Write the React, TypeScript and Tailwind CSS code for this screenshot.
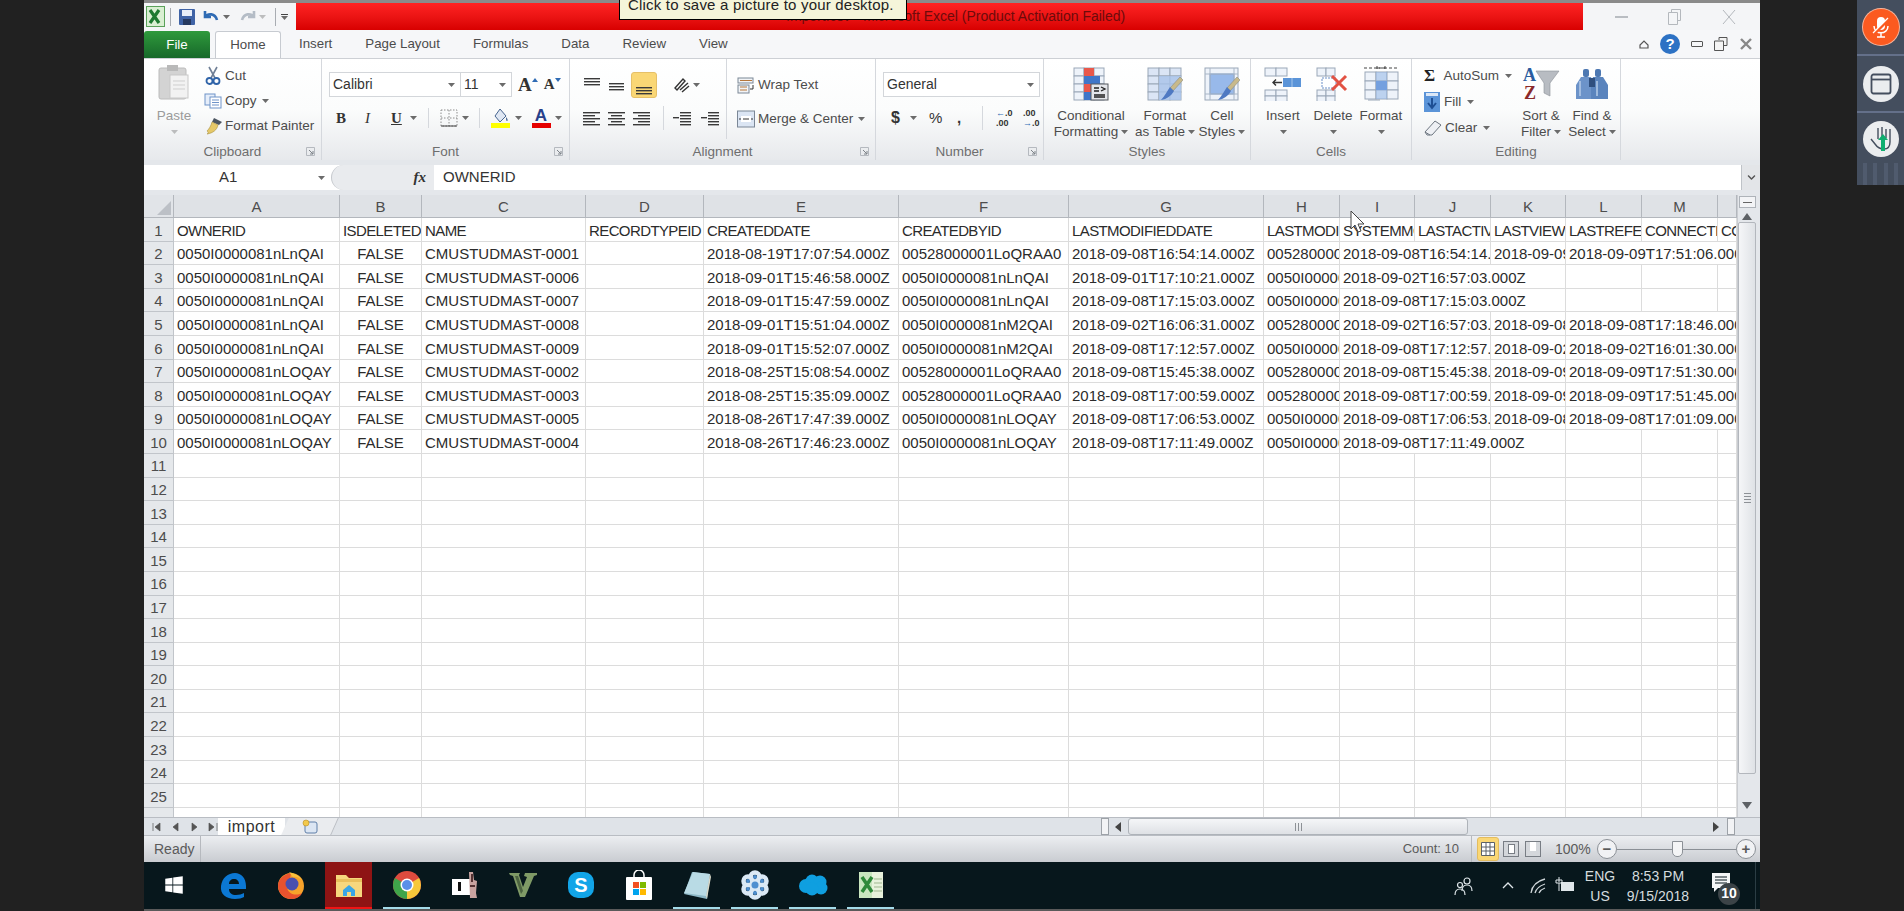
import React from "react";
import { FaWindows, FaChevronDown } from "react-icons/fa";

// column widths live in the grid template below: header + A..N
const COLUMNS = ["A", "B", "C", "D", "E", "F", "G", "H", "I", "J", "K", "L", "M", ""];

type Cell = { text?: string; span?: string; center?: boolean };

const OWNER_A = "0050I0000081nLnQAI";
const OWNER_B = "0050I0000081nLOQAY";
const OWNER_C = "00528000001LoQRAA0";
const OWNER_D = "0050I0000081nM2QAI";

const makeRow = (
	owner: string,
	name: string,
	created: string,
	by: string,
	modified: string,
	h: string,
	k?: string,
	l?: string,
): Cell[] => {
	const start: Cell[] = [
		{ text: owner },
		{ text: "FALSE", center: true },
		{ text: "CMUSTUDMAST-" + name },
		{},
		{ text: created },
		{ text: by },
		{ text: modified },
		{ text: h },
	];
	if (!k) return [...start, { text: modified, span: "col-span-3" }, {}, {}, {}];
	return [
		...start,
		{ text: modified, span: "col-span-2" },
		{ text: k },
		{ text: l, span: "col-span-3" },
	];
};

const ROWS: Cell[][] = [
	[
		"OWNERID",
		"ISDELETED",
		"NAME",
		"RECORDTYPEID",
		"CREATEDDATE",
		"CREATEDBYID",
		"LASTMODIFIEDDATE",
		"LASTMODIFIEDBYID",
		"SYSTEMMODSTAMP",
		"LASTACTIVITYDATE",
		"LASTVIEWEDDATE",
		"LASTREFERENCEDDATE",
		"CONNECTIONRECEIVEDID",
		"CONNECTIONSENTID",
	].map((text) => ({ text })),
	makeRow(OWNER_A, "0001", "2018-08-19T17:07:54.000Z", OWNER_C, "2018-09-08T16:54:14.000Z", OWNER_C, "2018-09-09T17:51:06.000Z", "2018-09-09T17:51:06.000Z"),
	makeRow(OWNER_A, "0006", "2018-09-01T15:46:58.000Z", OWNER_A, "2018-09-01T17:10:21.000Z", OWNER_A).map((c, i) =>
		i === 8 ? { text: "2018-09-02T16:57:03.000Z", span: "col-span-3" } : c,
	),
	makeRow(OWNER_A, "0007", "2018-09-01T15:47:59.000Z", OWNER_A, "2018-09-08T17:15:03.000Z", OWNER_A),
	makeRow(OWNER_A, "0008", "2018-09-01T15:51:04.000Z", OWNER_D, "2018-09-02T16:06:31.000Z", OWNER_C, "2018-09-08T17:18:46.000Z", "2018-09-08T17:18:46.000Z").map((c, i) =>
		i === 8 ? { text: "2018-09-02T16:57:03.000Z", span: "col-span-2" } : c,
	),
	makeRow(OWNER_A, "0009", "2018-09-01T15:52:07.000Z", OWNER_D, "2018-09-08T17:12:57.000Z", OWNER_A, "2018-09-02T16:01:30.000Z", "2018-09-02T16:01:30.000Z"),
	makeRow(OWNER_B, "0002", "2018-08-25T15:08:54.000Z", OWNER_C, "2018-09-08T15:45:38.000Z", OWNER_C, "2018-09-09T17:51:30.000Z", "2018-09-09T17:51:30.000Z"),
	makeRow(OWNER_B, "0003", "2018-08-25T15:35:09.000Z", OWNER_C, "2018-09-08T17:00:59.000Z", OWNER_C, "2018-09-09T17:51:45.000Z", "2018-09-09T17:51:45.000Z"),
	makeRow(OWNER_B, "0005", "2018-08-26T17:47:39.000Z", OWNER_B, "2018-09-08T17:06:53.000Z", OWNER_B, "2018-09-08T17:01:09.000Z", "2018-09-08T17:01:09.000Z"),
	makeRow(OWNER_B, "0004", "2018-08-26T17:46:23.000Z", OWNER_B, "2018-09-08T17:11:49.000Z", OWNER_B),
];

const Caret = ({ className = "" }: { className?: string }) => (
	<svg width="7" height="4" viewBox="0 0 7 4" className={"shrink-0 " + className}>
		<path d="M0 0h7L3.5 4z" fill="#6b6b6b" />
	</svg>
);

const Lines = ({ rows, box = 20 }: { rows: [number, number, number][]; box?: number }) => (
	<svg width={box} height={box} viewBox="0 0 20 20">
		{rows.map(([x, y, w], i) => (
			<rect key={i} x={x} y={y} width={w} height="1.4" fill="#3a3a3a" />
		))}
	</svg>
);

const cellsSvg = (x: number, y: number, cols: number, rows: number, w: number, h: number, fill = "#eef3fa") => {
	const out = [];
	for (let c = 0; c < cols; c++) {
		for (let r = 0; r < rows; r++) {
			out.push(
				<rect key={`${x}-${y}-${c}-${r}`} x={x + c * w} y={y + r * h} width={w} height={h} fill={fill} stroke="#9aa7b8" strokeWidth="1" />,
			);
		}
	}
	return out;
};

const Brush = () => (
	<g>
		<path d="M33 10 L36 13 L26 24 L23 21z" fill="#c8b98a" stroke="#8d8d80" strokeWidth="0.6" />
		<path d="M23 20 L27 24 C24 29 20 32 14 33 C18 29 20 24 23 20z" fill="#4f79c2" />
	</g>
);

const ConditionalIcon = () => (
	<svg width="36" height="34" viewBox="0 0 36 34">
		{cellsSvg(1, 1, 3, 4, 10, 8)}
		<rect x="11" y="1" width="10" height="8" fill="#e8574a" />
		<rect x="11" y="9" width="16" height="8" fill="#3f76c9" />
		<rect x="11" y="17" width="10" height="8" fill="#e8574a" />
		<rect x="11" y="25" width="10" height="8" fill="#3f76c9" />
		<rect x="18" y="17" width="17" height="16" fill="#e4e6ea" stroke="#55585e" />
		<path d="M21 21h5M21 24h5M21 28h11M21 30h11M28 20l4 2-4 2" stroke="#222" strokeWidth="1.3" fill="none" />
	</svg>
);
const TableIcon = () => (
	<svg width="36" height="34" viewBox="0 0 36 34">
		{cellsSvg(1, 1, 3, 4, 11, 8, "#dbe5f5")}
		<rect x="12" y="9" width="22" height="24" fill="#a9c3ea" opacity=".8" />
		<Brush />
	</svg>
);
const StylesIcon = () => (
	<svg width="36" height="34" viewBox="0 0 36 34">
		<rect x="1" y="1" width="33" height="32" fill="#eef3fa" stroke="#9aa7b8" />
		<rect x="6" y="7" width="24" height="20" fill="#98b9ea" stroke="#7b9ccc" />
		<path d="M6 1v32M30 1v32M1 7h33M1 27h33" stroke="#a9b6c6" />
		<Brush />
	</svg>
);
const InsertIcon = () => (
	<svg width="38" height="34" viewBox="0 0 38 34">
		{cellsSvg(1, 1, 2, 1, 11, 8)}
		{cellsSvg(1, 23, 2, 2, 11, 6)}
		<rect x="19" y="11" width="18" height="9" fill="#5b94d8" />
		<path d="M28 11v9" stroke="#a6c6ec" />
		<path d="M18 15.5H9m3-3-3 3 3 3" stroke="#333" strokeWidth="1.4" fill="none" />
	</svg>
);
const DeleteIcon = () => (
	<svg width="34" height="34" viewBox="0 0 34 34">
		{cellsSvg(1, 1, 2, 1, 9, 8)}
		{cellsSvg(1, 23, 2, 2, 9, 6)}
		<rect x="6" y="11" width="14" height="10" fill="#fff" stroke="#6a8fc8" strokeDasharray="2 1" />
		<path d="M16 9l14 14M30 9L16 23" stroke="#e25243" strokeWidth="3" />
	</svg>
);
const FormatIcon = () => (
	<svg width="36" height="38" viewBox="0 0 36 38">
		<path d="M1 3h34M14 3h8M14 1v4M22 1v4" stroke="#444" strokeDasharray="3 2" fill="none" />
		{cellsSvg(2, 7, 3, 3, 11, 9, "#eef3fa")}
		<rect x="13" y="16" width="11" height="9" fill="#4f86d8" />
		<rect x="13" y="7" width="11" height="27" fill="#93b6e6" opacity=".55" />
		<path d="M5 35h12" stroke="#9aa7b8" />
	</svg>
);
const SortIcon = () => (
	<svg width="38" height="36" viewBox="0 0 38 36">
		<path d="M14 5h23L28 17v13l-6-3V17z" fill="#b8bcc2" stroke="#8b9097" strokeWidth="0.6" />
		<text x="1" y="15" fontFamily="Liberation Serif" fontWeight="700" fontSize="18" fill="#2a5c9f">A</text>
		<text x="2" y="33" fontFamily="Liberation Serif" fontWeight="700" fontSize="18" fill="#8b2a2a">Z</text>
	</svg>
);
const FindIcon = () => (
	<svg width="34" height="34" viewBox="0 0 34 34">
		<rect x="8" y="2" width="6" height="8" rx="2" fill="#4d78b2" />
		<rect x="20" y="2" width="6" height="8" rx="2" fill="#4d78b2" />
		<path d="M6 10h10l2 8v14H1V18z" fill="#6c93c9" />
		<path d="M18 10h10l5 8v14H16V18z" fill="#5a84bd" />
		<rect x="14" y="11" width="6" height="9" fill="#2f4f7e" />
		<path d="M5 14v15M22 14v15" stroke="#b5cbe8" strokeWidth="1.5" />
	</svg>
);
const PasteIcon = () => (
	<svg width="32" height="36" viewBox="0 0 32 36">
		<rect x="1" y="4" width="27" height="31" rx="2" fill="#d3d3d3" stroke="#bcbcbc" />
		<rect x="9" y="1" width="11" height="6" fill="#b9b9b9" />
		<rect x="12" y="11" width="18" height="23" fill="#f2f2f2" stroke="#c8c8c8" />
		<path d="M15 17h12M15 21h12M15 25h12" stroke="#cfcfcf" />
	</svg>
);
const Scissors = () => (
	<svg width="16" height="19" viewBox="0 0 16 19">
		<path d="M4 1l6 11M12 1L6 12" stroke="#6f7f96" strokeWidth="1.6" />
		<circle cx="4.5" cy="15" r="3" fill="none" stroke="#2f63a8" strokeWidth="1.8" />
		<circle cx="11.5" cy="15" r="3" fill="none" stroke="#2f63a8" strokeWidth="1.8" />
	</svg>
);
const CopyIcon = () => (
	<svg width="18" height="16" viewBox="0 0 18 16">
		<rect x="1" y="1" width="10" height="11" fill="#e6eefa" stroke="#6e93c8" />
		<rect x="6" y="4" width="11" height="11" fill="#fff" stroke="#6e93c8" />
		<path d="M8 7h7M8 9.5h7M8 12h7" stroke="#6e93c8" />
	</svg>
);
const PainterIcon = () => (
	<svg width="20" height="18" viewBox="0 0 20 18">
		<path d="M11 1l8 4-3 3-7-3z" fill="#4b5560" />
		<path d="M9 5l6 3c-1 5-5 8-11 9 2-1 1-2 0-3C6 12 8 9 9 5z" fill="#e5c868" stroke="#a78f3d" strokeWidth="0.6" />
	</svg>
);

const Launcher = () => (
	<svg width="9" height="9" viewBox="0 0 9 9" className="shrink-0">
		<path d="M.5.5h8v8h-8z" fill="none" stroke="#b5b9bf" />
		<path d="M3 3l4 4M7 4v3H4" stroke="#7d8288" fill="none" />
	</svg>
);

const Group = ({ label, width, launcher, children }: { label: string; width: string; launcher?: boolean; children: React.ReactNode }) => (
	<div className={"flex flex-col border-r border-[#d5d8dd] " + width}>
		<div className="h-[80px] shrink-0">{children}</div>
		<div className="relative flex h-[22px] items-center justify-center pt-[4px] text-[#6e6e6e]">
			{label}
			{launcher && (
				<span className="absolute right-[6px] top-[8px]">
					<Launcher />
				</span>
			)}
		</div>
	</div>
);

const Big = ({ icon, lines, width, caretLine }: { icon: React.ReactNode; lines: string[]; width: string; caretLine?: boolean }) => (
	<div className={"flex flex-col items-center " + width}>
		<div className="flex h-[49px] items-center pt-[1px]">{icon}</div>
		<div className="leading-[16px]">{lines[0]}</div>
		<div className="flex h-[16px] items-center gap-[3px] whitespace-nowrap leading-[16px]">
			{lines[1]}
			{caretLine && <Caret />}
		</div>
	</div>
);

const Combo = ({ text, width }: { text: string; width: string }) => (
	<div className={"flex h-[25px] items-center justify-between border border-[#d3d6da] bg-white pl-[3px] pr-[5px] text-[14px] text-[#333] " + width}>
		{text}
		<Caret />
	</div>
);

const Sheet = () => (
	<div className="h-full overflow-hidden">
		<div className="grid w-[1593px] grid-cols-[30px_166px_82px_164px_118px_195px_170px_195px_76px_75px_76px_75px_76px_76px_19px] grid-rows-[23px] auto-rows-[23.6px] text-[15px] text-[#2b2b2b]">
			<div className="flex items-end justify-end border-b border-r border-[#b3b7bd] bg-[#e1e4e8] p-[2px]">
				<div className="h-0 w-0 border-b-[14px] border-l-[14px] border-b-[#bcc0c6] border-l-transparent" />
			</div>
			{COLUMNS.map((c, i) => (
				<div key={i} className="flex items-center justify-center border-b border-r border-[#b3b7bd] bg-[#dfe2e6] pt-[2px] text-[#4d4d4d]">
					{c}
				</div>
			))}
			{Array.from({ length: 26 }, (_, r) => (
				<React.Fragment key={r}>
					<div className="flex items-center justify-center border-b border-r border-[#c1c5ca] bg-[#e5e8eb] pt-[3px] text-[#4d4d4d]">{r < 25 ? r + 1 : ""}</div>
					{(ROWS[r] ?? COLUMNS.map(() => ({} as Cell))).map((cell, i) => (
						<div
							key={i}
							className={
								"flex items-center overflow-hidden whitespace-nowrap border-b border-r border-[#dcdcdc] px-[3px] pt-[3px] " +
								(r === 0 ? "tracking-[-0.6px] " : "") +
								(cell.center ? "justify-center " : "") +
								(cell.span ?? "")
							}
						>
							{cell.text}
						</div>
					))}
				</React.Fragment>
			))}
		</div>
	</div>
);

const ScrollBar = () => (
	<div className="flex w-[23px] shrink-0 flex-col items-center border-l border-[#c9ccd1] bg-[#e4e7eb] pr-[4px]">
		<div className="mt-[1px] flex h-[12px] w-[17px] items-center justify-center border border-[#aeb3b9] bg-[#f3f4f6]">
			<div className="h-[1px] w-[9px] bg-[#666]" />
		</div>
		<svg width="10" height="7" viewBox="0 0 10 7" className="mt-[5px]">
			<path d="M0 7h10L5 0z" fill="#5d6165" />
		</svg>
		<div className="mt-[2px] flex h-[552px] w-[18px] items-center justify-center rounded-[2px] border border-[#b3b7bd] bg-linear-to-r from-[#f5f6f8] to-[#dfe2e6]">
			<div className="flex flex-col gap-[2px]">
				<div className="h-[1px] w-[7px] bg-[#8d9196]" />
				<div className="h-[1px] w-[7px] bg-[#8d9196]" />
				<div className="h-[1px] w-[7px] bg-[#8d9196]" />
				<div className="h-[1px] w-[7px] bg-[#8d9196]" />
			</div>
		</div>
		<svg width="10" height="7" viewBox="0 0 10 7" className="mt-auto mb-[8px]">
			<path d="M0 0h10L5 7z" fill="#5d6165" />
		</svg>
	</div>
);

const Split = () => <div className="h-[17px] w-[8px] border border-[#9da2a8] bg-[#f2f3f5]" />;

const EdgeIcon = () => (
	<svg width="26" height="27" viewBox="0 0 26 27">
		<path
			d="M1 14C2 6 8 1 15 1c6 0 11 5 11 13v3H9c0 4 3 6 7 6 3 0 6-1 8-2v4c-2 1-5 2-9 2C6 27 0 22 1 14zM9 12h10c0-3-2-5-5-5s-5 2-5 5z"
			fill="#0b78d4"
		/>
	</svg>
);
const FirefoxIcon = () => (
	<svg width="28" height="28" viewBox="0 0 28 28">
		<circle cx="14" cy="15" r="13" fill="#f7a32b" />
		<path d="M14 2C7 3 1 8 1 15c0 7 6 13 13 13 5 0 9-2 11-6-5 3-13 2-15-5-1-4 1-7 3-9z" fill="#e8522e" />
		<circle cx="15" cy="13" r="6.5" fill="#4a4fb0" />
		<path d="M12 1c4 1 10 3 13 8-3-3-7-4-9-3z" fill="#f9c23c" />
	</svg>
);
const ExplorerIcon = () => (
	<svg width="26" height="24" viewBox="0 0 26 24">
		<path d="M0 2h10l3 3h13v19H0z" fill="#f6d77e" />
		<path d="M0 6h26v3H0z" fill="#e9bf5c" />
		<path d="M7 23v-6l6-5 6 5v6h-4v-4h-4v4z" fill="#39a6e6" />
	</svg>
);
const ChromeIcon = () => (
	<svg width="28" height="28" viewBox="0 0 28 28">
		<circle cx="14" cy="14" r="14" fill="#dd4b3e" />
		<path d="M14 14L14 28A14 14 0 0 1 1.900 7z" fill="#3fa54a" />
		<path d="M14 14L14 28A14 14 0 0 0 26.100 7z" fill="#f7c83a" />
		<circle cx="14" cy="14" r="6.500" fill="#fff" />
		<circle cx="14" cy="14" r="5" fill="#5a8fe8" />
	</svg>
);
const GameIcon = () => (
	<svg width="28" height="30" viewBox="0 0 28 30">
		<rect x="1" y="9" width="18" height="16" fill="#fff" />
		<rect x="7" y="12" width="3" height="9" fill="#111" />
		<path d="M18 2h4l1 8 3 1-1 12 1 5h-7z" fill="#c9a3a0" />
		<path d="M20 4h2v8h-2zM19 15h5v2h-5z" fill="#533" />
	</svg>
);
const VIcon = () => (
	<svg width="28" height="26" viewBox="0 0 28 26">
		<path d="M0 1h11l-1 2 4 12 4-10-3-1 1-3h12v2l-3 1-9 21h-5L4 4 1 3z" fill="#7f9a66" />
		<path d="M6 4h3l5 15-2 3z" fill="#4c6340" />
	</svg>
);
const SkypeIcon = () => (
	<div className="flex h-[26px] w-[26px] items-center justify-center rounded-[10px] bg-[#12a5e8] text-[20px] font-bold text-white">S</div>
);
const StoreIcon = () => (
	<svg width="28" height="30" viewBox="0 0 28 30">
		<path d="M9 8V5a5 5 0 0 1 10 0v3" fill="none" stroke="#fff" strokeWidth="1.500" />
		<rect x="1" y="7" width="26" height="23" rx="1" fill="#fff" />
		<rect x="8" y="12" width="6" height="6" fill="#f25022" />
		<rect x="15" y="12" width="6" height="6" fill="#7fba00" />
		<rect x="8" y="19" width="6" height="6" fill="#00a4ef" />
		<rect x="15" y="19" width="6" height="6" fill="#ffb900" />
	</svg>
);
const NoteIcon = () => (
	<svg width="28" height="28" viewBox="0 0 28 28">
		<path d="M9 1l18 2-3 25-23-5z" fill="#8db8c6" />
		<path d="M10 1l17 2-4 22-22-3z" fill="#b9dbe5" />
		<path d="M23 25l4-22 1 3-4 22z" fill="#d9d9c9" />
	</svg>
);
const SnowIcon = () => (
	<svg width="28" height="30" viewBox="0 0 28 30">
		<g fill="none" stroke="#dbe9f5" strokeWidth="4.500">
			<circle cx="14" cy="7" r="4.500" />
			<circle cx="14" cy="23" r="4.500" />
			<circle cx="7" cy="11" r="4.500" />
			<circle cx="21" cy="11" r="4.500" />
			<circle cx="7" cy="19" r="4.500" />
			<circle cx="21" cy="19" r="4.500" />
		</g>
		<circle cx="14" cy="15" r="3.500" fill="#4e8fd0" />
		<g fill="#4e8fd0">
			<circle cx="14" cy="7" r="2" />
			<circle cx="14" cy="23" r="2" />
			<circle cx="7" cy="11" r="2" />
			<circle cx="21" cy="11" r="2" />
			<circle cx="7" cy="19" r="2" />
			<circle cx="21" cy="19" r="2" />
		</g>
	</svg>
);
const CloudIcon = () => (
	<svg width="30" height="22" viewBox="0 0 30 22" fill="#0f9fe0">
		<circle cx="8" cy="12" r="7" />
		<circle cx="14" cy="7" r="6.500" />
		<circle cx="22" cy="8" r="6.500" />
		<circle cx="23" cy="14" r="6.500" />
		<circle cx="14" cy="15" r="6.500" />
	</svg>
);
const ExcelTaskIcon = () => (
	<svg width="26" height="28" viewBox="0 0 26 28">
		<rect x="1" y="1" width="24" height="26" fill="#c9e6bf" />
		<path d="M14 1h11v26H14z" fill="#e8f2dc" />
		<path d="M16 8h8M16 12h8M16 16h8M16 20h8" stroke="#9fb78f" />
		<path d="M4 6l10 15M14 6L4 21" stroke="#2f8a3a" strokeWidth="3.500" />
	</svg>
);

const Task = ({ children, running, active, width = "w-[58px]" }: { children: React.ReactNode; running?: boolean; active?: boolean; width?: string }) => (
	<div className={"relative flex h-full shrink-0 items-center justify-center " + width}>
		{active && <div className="absolute inset-y-0 left-[5px] w-[47px] border-b-[2px] border-[#f01414] bg-[#8e1414]" />}
		<div className="relative flex items-center justify-center pb-[1px]">{children}</div>
		{running && <div className="absolute bottom-0 left-[5px] h-[2px] w-[47px] bg-[#a4dcea]" />}
	</div>
);

export default function App() {
	return (
		<div className="relative flex h-[911px] w-[1904px] overflow-hidden bg-[#212121] font-['Liberation_Sans',sans-serif] text-[13.5px] text-[#4c4c4c]">
			<div className="w-[144px] shrink-0" />
			<div className="flex w-[1616px] shrink-0 flex-col bg-[#e4e7eb]">
				<div className="h-[3px] shrink-0 bg-[#8a8a8a]" />
				{/* title bar */}
				<div className="flex h-[27px] shrink-0 items-center bg-[#f4f5f7]">
					<div className="flex w-[152px] items-center pl-[2px]">
						<svg width="19" height="21" viewBox="0 0 19 21">
							<rect x="0.500" y="0.500" width="18" height="20" fill="#d9efd2" stroke="#5aa15a" />
							<path d="M4 4l9 13M13 4L4 17" stroke="#1d7a30" strokeWidth="3.200" />
						</svg>
						<div className="mx-[5px] h-[18px] w-[1px] bg-[#a8acb2]" />
						<svg width="16" height="16" viewBox="0 0 16 16" className="ml-[3px]">
							<rect width="16" height="16" rx="1" fill="#3f63a6" />
							<rect x="3" y="1" width="10" height="6" fill="#e8eef8" />
							<rect x="4" y="10" width="8" height="6" fill="#26395f" />
						</svg>
						<svg width="16" height="14" viewBox="0 0 16 14" className="ml-[8px]">
							<path d="M2 1v6h6M2 7c3-4 10-4 12 3" fill="none" stroke="#2f6bb4" strokeWidth="2.600" />
						</svg>
						<Caret className="ml-[4px]" />
						<svg width="16" height="14" viewBox="0 0 16 14" className="ml-[10px]">
							<path d="M14 1v6H8M14 7c-3-4-10-4-12 3" fill="none" stroke="#b4bcc6" strokeWidth="2.600" />
						</svg>
						<Caret className="ml-[3px] opacity-40" />
						<div className="ml-[9px] mr-[5px] h-[18px] w-[1px] bg-[#a8acb2]" />
						<div className="flex flex-col items-center gap-[1px]">
							<div className="h-[1px] w-[7px] bg-[#444]" />
							<Caret />
						</div>
					</div>
					<div className="flex h-full w-[1287px] items-center whitespace-nowrap bg-linear-to-b from-[#ff2222] to-[#d80000] pl-[490px] text-[14px] text-[#6d0b0b]">
						Import.csv - Microsoft Excel (Product Activation Failed)
					</div>
					<div className="flex flex-1 items-center justify-around pl-[12px] pr-[4px] text-[#b4b8bd]">
						<div className="h-[2px] w-[13px] bg-[#b9bdc2]" />
						<svg width="13" height="16" viewBox="0 0 13 16">
							<path d="M3.500 3.500V.5h9v11h-3M.5 3.500h9v12h-9z" fill="none" stroke="#b4b8bd" />
						</svg>
						<svg width="14" height="16" viewBox="0 0 14 16">
							<path d="M1 1l12 14M13 1L1 15" stroke="#b4b8bd" />
						</svg>
					</div>
				</div>
				{/* ribbon tabs */}
				<div className="flex h-[28px] shrink-0 items-end bg-[#f6f7f9] text-[13.3px]">
					<div className="flex h-[27px] w-[66px] items-center justify-center rounded-t-[3px] bg-linear-to-b from-[#2f9a3c] to-[#17692a] text-white">File</div>
					<div className="ml-[5px] flex h-[27px] w-[66px] items-center justify-center rounded-t-[3px] border border-b-0 border-[#c7cbd1] bg-white">Home</div>
					<div className="ml-[18px] flex items-center gap-[33px] self-center">
						<span>Insert</span>
						<span>Page Layout</span>
						<span>Formulas</span>
						<span>Data</span>
						<span>Review</span>
						<span>View</span>
					</div>
					<div className="ml-auto flex items-center gap-[11px] self-center pr-[7px]">
						<svg width="10" height="9" viewBox="0 0 10 9">
							<path d="M1 8V5l4-4 4 4v3z" fill="none" stroke="#555" strokeWidth="1.200" />
						</svg>
						<div className="flex h-[20px] w-[20px] items-center justify-center rounded-full bg-[#2d72c4] text-[15px] font-bold text-white">?</div>
						<div className="h-[6px] w-[12px] rounded-[1px] border border-[#555]" />
						<svg width="14" height="14" viewBox="0 0 14 14">
							<path d="M5 3V.5h8v8h-3M.5 4h9v9.500h-9z" fill="#f4f4f4" stroke="#555" />
						</svg>
						<svg width="14" height="14" viewBox="0 0 14 14">
							<path d="M2 2l10 10M12 2L2 12" stroke="#888" strokeWidth="2.400" />
						</svg>
					</div>
				</div>
				{/* ribbon */}
				<div className="flex h-[102px] shrink-0 border-t border-[#cdd0d5] bg-linear-to-b from-white via-[#fbfcfc] to-[#e7e9ec]">
					<Group label="Clipboard" width="w-[178px]" launcher>
						<div className="flex h-full">
							<div className="flex w-[60px] flex-col items-center pt-[5px] text-[#9b9b9b]">
								<PasteIcon />
								<div className="mt-[6px]">Paste</div>
								<Caret className="mt-[4px] opacity-40" />
							</div>
							<div className="flex flex-col pt-[4px]">
								<div className="flex h-[26px] items-center">
									<span className="-ml-[3px] flex w-[24px] justify-center">
										<Scissors />
									</span>
									<span>Cut</span>
								</div>
								<div className="flex h-[26px] items-center">
									<span className="-ml-[3px] flex w-[24px] justify-center">
										<CopyIcon />
									</span>
									<span>Copy</span>
									<Caret className="ml-[5px]" />
								</div>
								<div className="flex h-[26px] items-center">
									<span className="-ml-[3px] flex w-[24px] justify-center">
										<PainterIcon />
									</span>
									<span className="whitespace-nowrap">Format Painter</span>
								</div>
							</div>
						</div>
					</Group>
					<Group label="Font" width="w-[248px]" launcher>
						<div className="pl-[7px] pt-[13px]">
							<div className="flex h-[25px] items-center">
								<Combo text="Calibri" width="w-[132px]" />
								<Combo text="11" width="w-[52px] -ml-[1px]" />
								<span className="ml-[6px] font-['Liberation_Serif'] text-[19px] font-bold leading-none text-[#333]">A</span>
								<svg width="6" height="4" viewBox="0 0 6 4" className="mb-[10px]">
									<path d="M0 4h6L3 0z" fill="#2f6bb4" />
								</svg>
								<span className="ml-[6px] font-['Liberation_Serif'] text-[15px] font-bold leading-none text-[#333]">A</span>
								<svg width="6" height="4" viewBox="0 0 6 4" className="mb-[10px]">
									<path d="M0 0h6L3 4z" fill="#2f6bb4" />
								</svg>
							</div>
							<div className="mt-[9px] flex h-[24px] items-center pl-[7px] font-['Liberation_Serif'] text-[15px] text-[#333]">
								<span className="w-[29px] font-bold">B</span>
								<span className="w-[26px] italic">I</span>
								<span className="w-[19px] font-bold underline">U</span>
								<Caret />
								<div className="mx-[11px] h-[20px] w-[1px] bg-[#d5d8dd]" />
								<svg width="18" height="18" viewBox="0 0 18 18">
									<path d="M1 1h16v16H1zM9 1v16M1 9h16" fill="none" stroke="#8c8c8c" strokeDasharray="1.500 1.500" />
									<path d="M1 17h16" stroke="#444" />
								</svg>
								<Caret className="ml-[4px]" />
								<div className="ml-[10px] mr-[11px] h-[20px] w-[1px] bg-[#d5d8dd]" />
								<svg width="20" height="20" viewBox="0 0 20 20">
									<path d="M9 1l6 7-6 6-5-6z" fill="#dfe7f3" stroke="#46648f" />
									<path d="M15 9c2 2 2 4 1 4s-1-2-1-4z" fill="#46648f" />
									<rect y="15" width="19" height="5" fill="#ffff00" />
								</svg>
								<Caret className="ml-[4px]" />
								<span className="relative ml-[9px] flex w-[20px] flex-col items-center font-['Liberation_Sans'] text-[17px] font-bold leading-[15px] text-[#27408b]">
									A
									<span className="h-[5px] w-[19px] bg-[#e50000]" />
								</span>
								<Caret className="ml-[4px]" />
							</div>
						</div>
					</Group>
					<Group label="Alignment" width="w-[306px]" launcher>
						<div className="flex h-full">
							<div className="flex w-[157px] flex-col border-r border-[#d5d8dd] pl-[12px]">
								<div className="mt-[13px] flex h-[26px] items-center">
									<div className="mb-[7px] w-[24px]">
										<Lines rows={[[2, 6, 16], [2, 9, 16], [2, 12, 16]]} />
									</div>
									<div className="w-[25px]">
										<Lines rows={[[3, 8, 15], [3, 11, 15], [3, 14, 15]]} />
									</div>
									<div className="flex h-[26px] w-[26px] items-center justify-center rounded-[3px] border border-[#e6c068] bg-[#fad775]">
										<Lines rows={[[2, 12, 16], [2, 15, 16], [2, 18, 16]]} />
									</div>
									<div className="ml-[16px] flex items-center gap-[2px]">
										<svg width="18" height="18" viewBox="0 0 18 18">
											<path d="M2 12L10 3l2 2-8 9zM7 14l8-7M9 16l7-6" fill="none" stroke="#333" strokeWidth="1.400" />
										</svg>
										<Caret />
									</div>
								</div>
								<div className="mt-[8px] flex h-[24px] items-center">
									<div className="w-[24px]">
										<Lines rows={[[1, 4, 17], [1, 7, 12], [1, 10, 17], [1, 13, 12], [1, 16, 17]]} />
									</div>
									<div className="w-[25px]">
										<Lines rows={[[2, 4, 17], [5, 7, 11], [2, 10, 17], [5, 13, 11], [2, 16, 17]]} />
									</div>
									<div className="w-[24px]">
										<Lines rows={[[2, 4, 17], [7, 7, 12], [2, 10, 17], [7, 13, 12], [2, 16, 17]]} />
									</div>
									<div className="mx-[8px] h-[24px] w-[1px] bg-[#d5d8dd]" />
									<div className="w-[28px]">
										<Lines rows={[[8, 4, 11], [8, 7, 11], [8, 10, 11], [8, 13, 11], [8, 16, 11], [1, 9, 6]]} />
									</div>
									<div className="w-[24px]">
										<Lines rows={[[8, 4, 11], [8, 7, 11], [8, 10, 11], [8, 13, 11], [8, 16, 11], [1, 9, 6]]} />
									</div>
								</div>
							</div>
							<div className="flex flex-col pl-[10px]">
								<div className="mt-[13px] flex h-[26px] items-center gap-[3px]">
									<svg width="18" height="18" viewBox="0 0 18 18">
										<rect x="1" y="2" width="15" height="5" fill="#f2f4f7" stroke="#7b8796" />
										<rect x="1" y="9" width="11" height="8" fill="#f2f4f7" stroke="#7b8796" />
										<path d="M3 4.500h12M3 11h7M3 14h7" stroke="#b5763a" />
										<path d="M16 9v4h-3" fill="none" stroke="#333" />
									</svg>
									<span>Wrap Text</span>
								</div>
								<div className="mt-[9px] flex h-[24px] items-center gap-[3px] whitespace-nowrap">
									<svg width="18" height="18" viewBox="0 0 18 18">
										<rect x="0.500" y="1" width="17" height="16" fill="#dbe5f3" stroke="#7b8796" />
										<rect x="4" y="6" width="10" height="6" fill="#fff" />
										<path d="M6 9h6M2 9h2M14 9h2" stroke="#333" />
									</svg>
									<span>Merge &amp; Center</span>
									<Caret className="ml-[2px]" />
								</div>
							</div>
						</div>
					</Group>
					<Group label="Number" width="w-[168px]" launcher>
						<div className="pl-[7px] pt-[13px]">
							<Combo text="General" width="w-[157px]" />
							<div className="mt-[9px] flex h-[24px] items-center pl-[8px] text-[#333]">
								<span className="w-[19px] text-[16px] font-bold">$</span>
								<Caret />
								<span className="ml-[12px] w-[28px] text-[15px]">%</span>
								<span className="w-[20px] text-[15px] font-bold leading-[14px]">,</span>
								<div className="mx-[5px] h-[24px] w-[1px] bg-[#d5d8dd]" />
								<span className="ml-[8px] w-[27px] text-[9px] font-bold leading-[10px] text-[#333]">
									<span className="text-[#2f6bb4]">←</span>.0
									<br />
									.00
								</span>
								<span className="text-[9px] font-bold leading-[10px]">
									.00
									<br />
									<span className="text-[#2f6bb4]">→</span>.0
								</span>
							</div>
						</div>
					</Group>
					<Group label="Styles" width="w-[207px]">
						<div className="flex pl-[3px]">
							<Big icon={<ConditionalIcon />} lines={["Conditional", "Formatting"]} width="w-[88px]" caretLine />
							<Big icon={<TableIcon />} lines={["Format", "as Table"]} width="w-[60px]" caretLine />
							<Big icon={<StylesIcon />} lines={["Cell", "Styles"]} width="w-[54px]" caretLine />
						</div>
					</Group>
					<Group label="Cells" width="w-[161px]">
						<div className="flex pl-[7px]">
							<Big icon={<InsertIcon />} lines={["Insert", ""]} width="w-[50px]" caretLine />
							<Big icon={<DeleteIcon />} lines={["Delete", ""]} width="w-[50px]" caretLine />
							<Big icon={<FormatIcon />} lines={["Format", ""]} width="w-[46px]" caretLine />
						</div>
					</Group>
					<Group label="Editing" width="w-[209px]">
						<div className="flex">
							<div className="flex w-[100px] flex-col pl-[12px] pt-[4px]">
								<div className="flex h-[26px] items-center">
									<span className="w-[20px] font-['Liberation_Serif'] text-[17px] font-bold text-[#222]">Σ</span>
									<span>AutoSum</span>
									<Caret className="ml-[6px]" />
								</div>
								<div className="flex h-[26px] items-center">
									<svg width="16" height="20" viewBox="0 0 16 20" className="mr-[4px]">
										<rect width="16" height="20" fill="#5b94d8" />
										<rect x="2" y="1" width="12" height="3" fill="#dbe7f6" />
										<path d="M8 6v9M4 11l4 5 4-5" fill="none" stroke="#1e4f94" strokeWidth="2" />
									</svg>
									<span>Fill</span>
									<Caret className="ml-[6px]" />
								</div>
								<div className="flex h-[26px] items-center">
									<svg width="18" height="18" viewBox="0 0 18 18" className="mr-[3px]">
										<path d="M1 13L11 2l6 4-9 10H3z" fill="#eef0f4" stroke="#6d7680" />
										<path d="M1 13l5 3" stroke="#6d7680" />
									</svg>
									<span>Clear</span>
									<Caret className="ml-[6px]" />
								</div>
							</div>
							<Big icon={<SortIcon />} lines={["Sort &", "Filter"]} width="w-[58px]" caretLine />
							<Big icon={<FindIcon />} lines={["Find &", "Select"]} width="w-[44px]" caretLine />
						</div>
					</Group>
				</div>
				{/* formula bar */}
				<div className="mt-[5px] flex h-[25px] shrink-0 items-center bg-white text-[15px] text-[#333]">
					<div className="flex h-full w-[187px] items-center justify-between pl-[75px] pr-[6px]">
						A1
						<Caret className="mt-[1px]" />
					</div>
					<div className="flex h-full w-[103px] items-center justify-end rounded-l-[14px] border-l border-[#c5c8cd] bg-[#e9ebee] pr-[8px]">
						<span className="font-['Liberation_Serif'] text-[15px] font-bold italic">fx</span>
					</div>
					<div className="flex-1 pl-[9px]">OWNERID</div>
					<div className="flex h-full w-[19px] items-center justify-center border-l border-[#bfc3c8] bg-[#e3e5e8] text-[#555]">
						<FaChevronDown size={9} />
					</div>
				</div>
				<div className="h-[5px] shrink-0" />
				{/* sheet */}
				<div className="flex h-[622px] shrink-0 bg-white">
					<div className="min-w-0 flex-1">
						<Sheet />
					</div>
					<ScrollBar />
				</div>
				{/* sheet tabs */}
				<div className="flex h-[19px] shrink-0 items-center border-y border-[#b9bdc3] bg-[#dfe3e8]">
					<div className="flex w-[74px] items-center gap-[9px] pl-[7px]">
						{["M2 1v8M9 1L4 5l5 4z", "M8 1L3 5l5 4z", "M3 1l5 4-5 4z", "M1 1l5 4-5 4zM9 1v8"].map((d) => (
							<svg key={d} width="10" height="10" viewBox="0 0 10 10">
								<path d={d} fill="#555" stroke="#555" strokeWidth="0.700" />
							</svg>
						))}
					</div>
					<div className="flex h-full w-[67px] items-center justify-center bg-white text-[16px] tracking-[0.5px] text-[#333]">import</div>
					<div className="flex h-full w-[50px] skew-x-[-24deg] items-center justify-center border-r border-[#b9bdc3] bg-[#eaecef]">
						<svg width="18" height="15" viewBox="0 0 18 15" className="skew-x-[24deg]">
							<rect x="4" y="3" width="12" height="11" rx="2" fill="#dce6f3" stroke="#5f7fa8" />
							<circle cx="5" cy="4" r="3" fill="#f2c94c" stroke="#b88d25" strokeWidth="0.600" />
						</svg>
					</div>
					<div className="ml-auto flex h-full items-center">
						<Split />
						<svg width="6" height="10" viewBox="0 0 6 10" className="ml-[6px]">
							<path d="M6 0v10L0 5z" fill="#444" />
						</svg>
						<div className="ml-[7px] flex h-[17px] w-[340px] items-center justify-center rounded-[3px] border border-[#aeb3b9] bg-linear-to-b from-[#f5f6f8] to-[#dee1e5]">
							<div className="flex gap-[2px]">
								<div className="h-[8px] w-[1px] bg-[#8d9196]" />
								<div className="h-[8px] w-[1px] bg-[#8d9196]" />
								<div className="h-[8px] w-[1px] bg-[#8d9196]" />
							</div>
						</div>
						<svg width="6" height="10" viewBox="0 0 6 10" className="ml-[245px]">
							<path d="M0 0v10l6-5z" fill="#444" />
						</svg>
						<div className="ml-[8px]">
							<Split />
						</div>
						<div className="w-[25px]" />
					</div>
				</div>
				{/* status bar */}
				<div className="flex h-[26px] shrink-0 items-center bg-linear-to-b from-[#eceef1] to-[#c9ccd1] text-[14px] text-[#5a5a5a]">
					<div className="flex h-full w-[57px] items-center border-r border-[#b6b9be] pl-[10px]">Ready</div>
					<div className="ml-auto flex h-full items-center">
						<span className="whitespace-nowrap text-[13px]">Count: 10</span>
						<div className="ml-[12px] h-full w-[1px] bg-[#b6b9be]" />
						<div className="ml-[5px] flex h-[24px] w-[22px] items-center justify-center rounded-[3px] border border-[#e3bc5f] bg-[#fad775]">
							<svg width="14" height="14" viewBox="0 0 14 14">
								<path d="M.5.5h13v13H.5zM5 .5v13M9 .5v13M.5 5h13M.5 9h13" fill="#fff" stroke="#5b6168" />
							</svg>
						</div>
						<div className="ml-[4px] flex h-[16px] w-[16px] items-center justify-center border border-[#787d84] bg-[#d4d7db]">
							<div className="h-[10px] w-[7px] border border-[#787d84] bg-white" />
						</div>
						<div className="ml-[6px] flex h-[16px] w-[16px] justify-center border border-[#787d84] bg-[#d4d7db]">
							<div className="h-[9px] w-[6px] bg-white" />
						</div>
						<span className="ml-[14px] w-[34px]">100%</span>
						<div className="ml-[8px] flex h-[20px] w-[20px] items-center justify-center rounded-full border border-[#8b9096] bg-[#f1f2f4] text-[15px] font-bold">−</div>
						<div className="flex w-[119px] items-center justify-center">
							<div className="relative h-[1px] w-full bg-[#8b9096]">
								<div className="absolute left-[55px] -top-[8px] h-[16px] w-[11px] rounded-b-[5px] border border-[#8b9096] bg-[#f4f5f6]" />
							</div>
						</div>
						<div className="flex h-[20px] w-[20px] items-center justify-center rounded-full border border-[#8b9096] bg-[#f1f2f4] text-[15px] font-bold">+</div>
						<div className="w-[4px]" />
					</div>
				</div>
				{/* windows taskbar */}
				<div className="flex h-[47px] shrink-0 items-center bg-[#07171c] text-[14px] text-[#d5dcdf]">
					<Task width="w-[60px]">
						<FaWindows size={20} color="#fff" />
					</Task>
					<Task>
						<EdgeIcon />
					</Task>
					<Task>
						<FirefoxIcon />
					</Task>
					<Task active>
						<ExplorerIcon />
					</Task>
					<Task running>
						<ChromeIcon />
					</Task>
					<Task>
						<GameIcon />
					</Task>
					<Task>
						<VIcon />
					</Task>
					<Task>
						<SkypeIcon />
					</Task>
					<Task>
						<StoreIcon />
					</Task>
					<Task running>
						<NoteIcon />
					</Task>
					<Task running>
						<SnowIcon />
					</Task>
					<Task running>
						<CloudIcon />
					</Task>
					<Task running>
						<ExcelTaskIcon />
					</Task>
					<div className="ml-auto flex h-full items-center">
						<svg width="20" height="20" viewBox="0 0 20 20">
							<g fill="none" stroke="#dfe6e9" strokeWidth="1.200">
								<circle cx="13" cy="5" r="3" />
								<path d="M8 15c0-4 2-6 5-6s5 2 5 6" />
								<circle cx="6" cy="9" r="2.500" />
								<path d="M1 19c0-4 2-6 5-6s5 2 5 6" />
							</g>
						</svg>
						<svg width="12" height="7" viewBox="0 0 12 7" className="ml-[28px]">
							<path d="M1 6l5-5 5 5" fill="none" stroke="#dfe6e9" strokeWidth="1.300" />
						</svg>
						<svg width="18" height="16" viewBox="0 0 18 16" className="ml-[15px]">
							<path d="M2 15C3 8 8 3 16 1M6 15c1-4 4-7 10-9M10 15c1-2 3-4 6-5" fill="none" stroke="#cfd6d9" strokeWidth="1.300" />
						</svg>
						<svg width="20" height="18" viewBox="0 0 20 18" className="ml-[8px]">
							<rect x="6" y="5" width="13" height="9" fill="#dfe6e9" />
							<path d="M4 0v5M1 3h6v3H1zM4 6v8" stroke="#dfe6e9" fill="none" />
						</svg>
						<div className="ml-[5px] flex w-[40px] flex-col items-center leading-[20px]">
							<span>ENG</span>
							<span>US</span>
						</div>
						<div className="flex w-[76px] flex-col items-center leading-[20px]">
							<span>8:53 PM</span>
							<span>9/15/2018</span>
						</div>
						<div className="relative ml-[14px] flex w-[45px] pl-[2px]">
							<svg width="18" height="20" viewBox="0 0 18 20" className="mb-[6px]">
								<path d="M0 0h18v15H6l-4 4v-4H0z" fill="#f4f6f7" />
								<path d="M3 4h12M3 7h12M3 10h12" stroke="#07171c" />
							</svg>
							<div className="absolute left-[8px] top-[10px] flex h-[22px] w-[22px] items-center justify-center rounded-full bg-[#3b4347] text-[14px] font-bold text-white">10</div>
						</div>
						<div className="h-full w-[1px] bg-[#2b3d44]" />
						<div className="w-[4px]" />
					</div>
				</div>
				<div className="h-[2px] shrink-0 bg-[#5a5a5a]" />
			</div>
			{/* conference side panel */}
			<div className="ml-auto flex h-[185px] w-[47px] shrink-0 flex-col bg-[#444e5e]">
				<div className="flex h-[56px] items-center justify-center border-b-[2px] border-[#64708a]">
					<div className="flex h-[36px] w-[36px] items-center justify-center rounded-full bg-[#fb5a20] ring-1 ring-[#f8b59c]">
						<svg width="20" height="24" viewBox="0 0 20 24">
							<rect x="6" y="2" width="8" height="13" rx="4" fill="#fff" />
							<path d="M3 11c0 9 14 9 14 0M10 18v4M6 22h8" fill="none" stroke="#fff" strokeWidth="1.500" />
							<path d="M2 20L18 4" stroke="#fb5a20" strokeWidth="3" />
							<path d="M2 18L17 3" stroke="#fff" strokeWidth="1.300" />
						</svg>
					</div>
				</div>
				<div className="flex h-[57px] items-center justify-center border-b-[2px] border-[#64708a]">
					<div className="flex h-[36px] w-[36px] items-center justify-center rounded-full bg-[#ebedef]">
						<svg width="22" height="22" viewBox="0 0 22 22">
							<rect x="1.500" y="1.500" width="19" height="19" rx="2" fill="none" stroke="#444e5e" strokeWidth="1.800" />
							<path d="M1.500 6.500h19" stroke="#444e5e" strokeWidth="1.800" />
						</svg>
					</div>
				</div>
				<div className="flex h-[50px] items-center justify-center pt-[2px]">
					<div className="flex h-[36px] w-[36px] items-center justify-center rounded-full bg-[#ebedef]">
						<svg width="24" height="28" viewBox="0 0 24 28">
							<path d="M2 14l4 5c2 3 5 5 9 5s6-3 6-7V4M17 4v9M13 2v11M9 3v11" fill="none" stroke="#444e5e" strokeWidth="1.400" />
							<path d="M14 9l5 6h-3v11h-4V15H9z" fill="#0fae70" />
						</svg>
					</div>
				</div>
				<div className="flex flex-1 justify-evenly opacity-60">
					<div className="w-[4px] bg-[#59647a]" />
					<div className="w-[4px] bg-[#59647a]" />
					<div className="w-[4px] bg-[#59647a]" />
					<div className="w-[4px] bg-[#59647a]" />
				</div>
			</div>
			{/* tooltip over the title bar */}
			<div className="absolute left-[619px] top-0 h-[20px] w-[288px] overflow-hidden border-x border-b border-black bg-[#f5f5da] pl-[8px] text-[15px] leading-[10px] tracking-[0.2px] text-[#222]">
				Click to save a picture to your desktop.
			</div>
			{/* mouse pointer */}
			<svg width="16" height="23" viewBox="0 0 16 23" className="absolute left-[1350px] top-[210px]">
				<path d="M1 1v18l4-4 3 7 3-1-3-7h6z" fill="#fff" stroke="#444" />
			</svg>
		</div>
	);
}
